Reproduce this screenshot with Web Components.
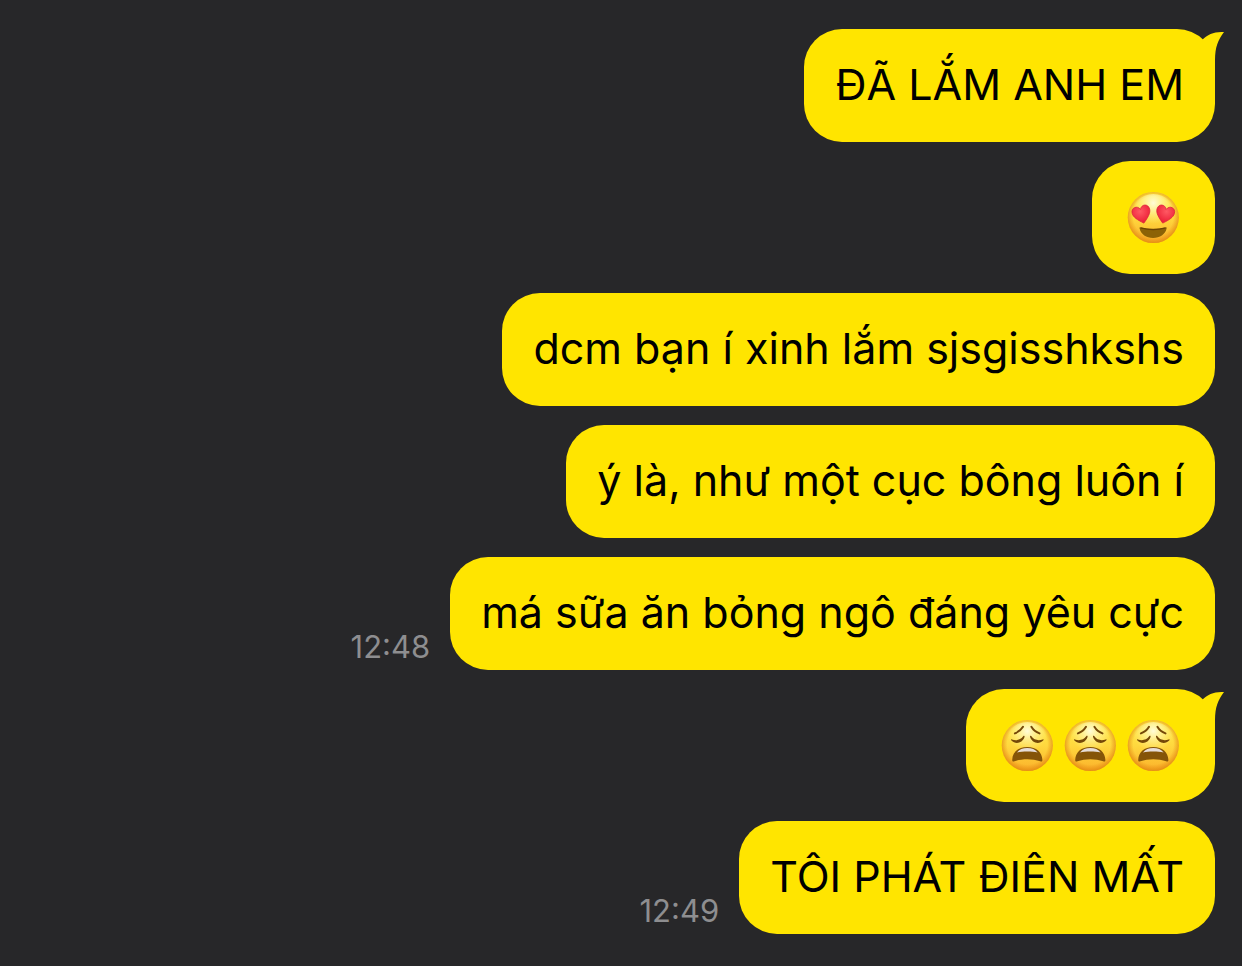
<!DOCTYPE html>
<html lang="vi">
<head>
<meta charset="utf-8">
<meta name="viewport" content="width=device-width, initial-scale=1">
<title>Chat</title>
<style>
  body { margin: 0; background: #272729; font-family: Inter, "Open Sans", sans-serif; }
</style>
</head>
<body>
<chat-thread>
  <chat-message tail>ĐÃ LẮM ANH EM</chat-message>
  <chat-message><emoji-face kind="love"></emoji-face></chat-message>
  <chat-message>dcm bạn í xinh lắm sjsgisshkshs</chat-message>
  <chat-message>ý là, như một cục bông luôn í</chat-message>
  <chat-message time="12:48">má sữa ăn bỏng ngô đáng yêu cực</chat-message>
  <chat-message tail><emoji-face kind="weary"></emoji-face><emoji-face kind="weary"></emoji-face><emoji-face kind="weary"></emoji-face></chat-message>
  <chat-message time="12:49">TÔI PHÁT ĐIÊN MẤT</chat-message>
</chat-thread>

<script>
class ChatThread extends HTMLElement {
  constructor() {
    super();
    this.attachShadow({ mode: 'open' }).innerHTML = `
      <style>
        :host { display: block; }
        main { display: flex; flex-direction: column; gap: 19px; padding: 29px 27px 32px; }
      </style>
      <main><slot></slot></main>`;
  }
}

class ChatMessage extends HTMLElement {
  connectedCallback() {
    if (this.shadowRoot) return;
    const time = this.getAttribute('time');
    this.attachShadow({ mode: 'open' }).innerHTML = `
      <style>
        :host { display: flex; justify-content: flex-end; align-items: flex-end; gap: 20px; }
        .bubble {
          position: relative; display: flex; align-items: center; gap: 2px;
          box-sizing: border-box; min-height: 113px; padding: 27px 31px 30px;
          border-radius: 38px; background: #ffe500; color: #000;
          font-size: 43px; line-height: 56px;
        }
        time { flex: none; color: #8e8e90; font-size: 31px; line-height: 36px; padding-bottom: 5px; }
        .tail { position: absolute; top: 0; right: -10px; width: 32px; height: 42px; }
      </style>
      ${time ? `<time datetime="${time}">${time}</time>` : ''}
      <div class="bubble"><slot></slot>
        ${this.hasAttribute('tail') ? `<svg class="tail" viewBox="0 0 32 42" aria-hidden="true">
          <path d="M9.6 10.6C14.5 5.4 21.5 2.3 31 3C25 11 22 18 22 31V42L6 28Z" fill="#ffe500"/></svg>` : ''}
      </div>`;
  }
}

const FACES = {
  love: {
    label: '😍',
    art: `
      <g fill="url(#heart)" stroke="#d9203a" stroke-width=".7">
        <path d="M18.6 36.4C13 31.6 9.6 28.2 9.6 24.1C9.6 18.2 16.6 17.2 18.6 22.3C20.6 17.2 27.6 18.2 27.6 24.1C27.6 28.2 24.2 31.6 18.6 36.4Z" transform="rotate(-14 18.6 27)"/>
        <path d="M18.6 36.4C13 31.6 9.6 28.2 9.6 24.1C9.6 18.2 16.6 17.2 18.6 22.3C20.6 17.2 27.6 18.2 27.6 24.1C27.6 28.2 24.2 31.6 18.6 36.4Z" transform="translate(60.6 0) scale(-1 1) rotate(-14 18.6 27)"/>
      </g>
      <path d="M17.6 40.4C25 42.3 35.2 42.3 42.6 40.4C43.4 40.2 43.8 40.8 43.6 41.6C42.2 47.6 37 51 30.1 51S18 47.6 16.6 41.6C16.4 40.8 16.8 40.2 17.6 40.4Z" fill="#8c6206"/>
      <path d="M17.6 40.9C25 42.9 35.2 42.9 42.6 40.9" fill="none" stroke="#6b4304" stroke-width="1.4"/>`
  },
  weary: {
    label: '😩',
    art: `
      <g fill="none" stroke="#754808" stroke-width="2" stroke-linecap="round">
        <path d="M17.9 18.4C21.6 17 24.3 14.7 26 11.8M42.5 18.4C38.8 17 36.1 14.7 34.4 11.8"/>
      </g>
      <path d="M14.9 24.4C19.2 26 23.6 25 26.2 21.3C27 20.4 27.9 20.9 27.5 22C25.4 28.4 18.4 29.8 14.4 25.5C13.7 24.7 14.1 24 14.9 24.4ZM45.7 24.4C41.4 26 37 25 34.4 21.3C33.6 20.4 32.7 20.9 33.1 22C35.2 28.4 42.2 29.8 46.2 25.5C46.9 24.7 46.5 24 45.7 24.4Z" fill="#754808"/>
      <path d="M15.2 45C15.4 37 21.3 31.9 30.3 31.9S45.2 37 45.4 45C45.4 46.4 44.5 46.8 43.2 46.3C35.4 43.6 25.2 43.6 17.4 46.3C16.1 46.8 15.2 46.4 15.2 45Z" fill="#855408"/>
      <path d="M20 37.6C22.3 34.2 25.8 33 30.3 33S38.3 34.2 40.6 37.6C35 36.2 25.6 36.2 20 37.6Z" fill="#e6dcd8"/>`
  }
};

class EmojiFace extends HTMLElement {
  connectedCallback() {
    if (this.shadowRoot) return;
    const face = FACES[this.getAttribute('kind')];
    this.attachShadow({ mode: 'open' }).innerHTML = `
      <style>
        :host { display: block; flex: none; }
        svg { display: block; width: 61px; height: 56px; }
      </style>
      <svg viewBox="0 1 61 56" role="img" aria-label="${face.label}">
        <defs>
          <linearGradient id="skin" x2="0" y2="1">
            <stop stop-color="#fff04a"/><stop offset=".5" stop-color="#ffd83e"/><stop offset="1" stop-color="#fbb02a"/>
          </linearGradient>
          <radialGradient id="shade" cx=".5" cy=".48" r=".52">
            <stop offset=".75" stop-color="#e88a12" stop-opacity="0"/><stop offset="1" stop-color="#e0850f" stop-opacity=".8"/>
          </radialGradient>
          <radialGradient id="glow" cx=".5" cy=".2" r=".46">
            <stop stop-color="#fffde0" stop-opacity=".95"/><stop offset="1" stop-color="#fff3a0" stop-opacity="0"/>
          </radialGradient>
          <radialGradient id="heart" cx=".45" cy=".3" r=".75">
            <stop stop-color="#ff5963"/><stop offset="1" stop-color="#e9152f"/>
          </radialGradient>
        </defs>
        <circle cx="30.3" cy="30.5" r="25.6" fill="url(#skin)"/>
        <circle cx="30.3" cy="30.5" r="25.6" fill="url(#shade)"/>
        <circle cx="30.3" cy="29.5" r="22.5" fill="url(#glow)"/>
        ${face.art}
      </svg>`;
  }
}

customElements.define('chat-thread', ChatThread);
customElements.define('chat-message', ChatMessage);
customElements.define('emoji-face', EmojiFace);
</script>
</body>
</html>
